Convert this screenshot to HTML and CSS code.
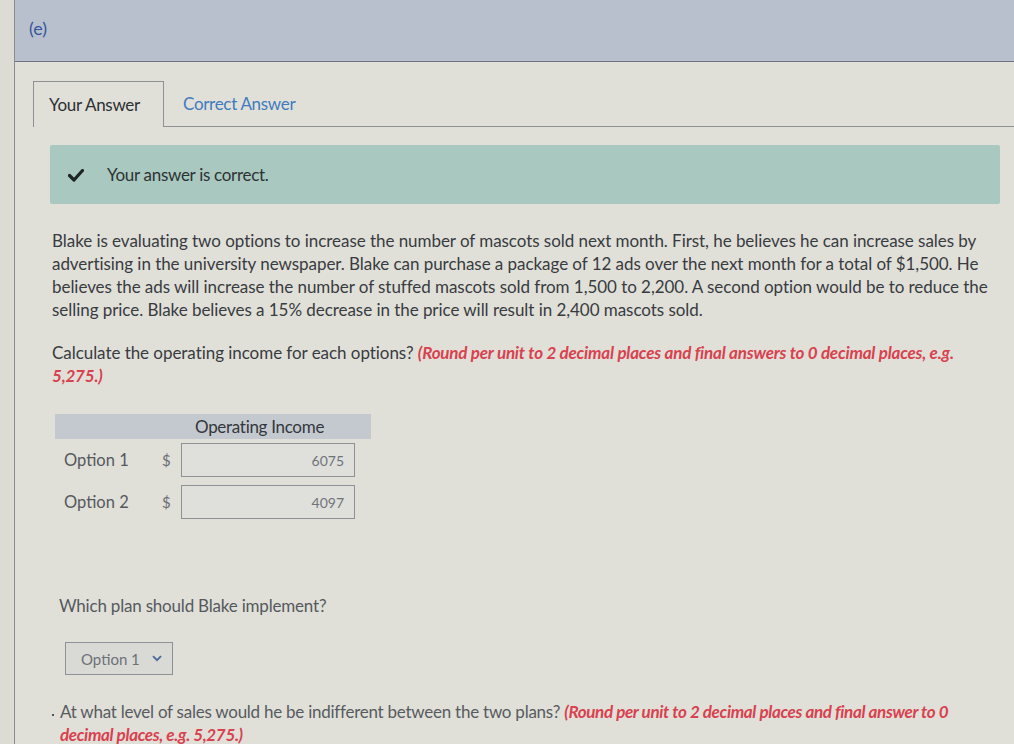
FILE: index.html
```html
<!DOCTYPE html>
<html>
<head>
<meta charset="utf-8">
<link rel="stylesheet" href="styles.css">
</head>
<body>
<div class="frame">
  <header class="part-head"><span class="part-label">(e)</span></header>
  <main class="content">
    <nav class="tabs">
      <div class="tab active">Your Answer</div>
      <div class="tab link">Correct Answer</div>
      <div class="tab-rest"></div>
    </nav>
    <div class="banner">
      <svg class="check" width="16" height="13" viewBox="0 0 16 13"><path d="M1.5 6.5 L6 11 L14.5 1.5" fill="none" stroke="#1f2526" stroke-width="3.2" stroke-linecap="round" stroke-linejoin="round"/></svg>
      <span>Your answer is correct.</span>
    </div>
    <p class="para">Blake is evaluating two options to increase the number of mascots sold next month. First, he believes he can increase sales by advertising in the university newspaper. Blake can purchase a package of 12 ads over the next month for a total of $1,500. He believes the ads will increase the number of stuffed mascots sold from 1,500 to 2,200. A second option would be to reduce the selling price. Blake believes a 15% decrease in the price will result in 2,400 mascots sold.</p>
    <p class="para calc">Calculate the operating income for each options? <em class="hint">(Round per unit to 2 decimal places and final answers to 0 decimal places, e.g. 5,275.)</em></p>
    <div class="table">
      <div class="thead"><span class="th">Operating Income</span></div>
      <div class="row"><span class="lbl">Option 1</span><span class="cur">$</span><span class="input">6075</span></div>
      <div class="row"><span class="lbl">Option 2</span><span class="cur">$</span><span class="input">4097</span></div>
    </div>
    <p class="question">Which plan should Blake implement?</p>
    <div class="select"><span>Option 1</span><svg width="10" height="7" viewBox="0 0 10 7"><path d="M1 1.2 L5 5.2 L9 1.2" fill="none" stroke="#4a6a9a" stroke-width="1.8"/></svg></div>
    <p class="para last"><span class="dot"></span>At what level of sales would he be indifferent between the two plans? <em class="hint">(Round per unit to 2 decimal places and final answer to 0 decimal places, e.g. 5,275.)</em></p>
  </main>
</div>
</body>
</html>
```
FILE: styles.css
```css
html, body {
  margin: 0;
  padding: 0;
  height: 100%;
  overflow: hidden;
}
body {
  background: #dcdcd5;
  font-family: Lato, "Open Sans", sans-serif;
  color: #3a3d40;
}
.frame {
  margin-left: 14px;
  border-left: 1px solid #8a8d90;
  height: 100%;
  background: #e0e0d9;
}
.part-head {
  height: 62px;
  background: #b9c0cd;
  border-bottom: 1px solid #6f7480;
  box-sizing: border-box;
  padding: 17px 0 0 14px;
}
.part-label {
  color: #35569a;
  font-size: 18px;
}
.content {
  padding: 19px 0 0 18px;
}
.tabs {
  display: flex;
  align-items: flex-end;
  height: 46px;
}
.tab {
  font-size: 17px;
  padding: 0 15px;
  height: 46px;
  box-sizing: border-box;
  display: flex;
  align-items: center;
  letter-spacing: -0.3px;
}
.tab.active {
  border: 1px solid #8d9094;
  border-bottom: none;
  color: #2c2f33;
  width: 131px;
}
.tab.link {
  color: #3f7bbd;
  border-bottom: 1px solid #8d9094;
  padding-left: 19px;
}
.tab-rest {
  flex: 1;
  height: 46px;
  border-bottom: 1px solid #8d9094;
  box-sizing: border-box;
}
.banner {
  margin: 18px 14px 0 17px;
  height: 59px;
  background: #a9c8c0;
  border-radius: 2px;
  display: flex;
  align-items: center;
  padding-left: 18px;
  font-size: 17px;
  color: #2d3334;
  letter-spacing: -0.3px;
}
.check {
  margin-right: 23px;
  margin-top: 2px;
}
.para {
  margin: 0;
  margin-left: 19px;
  width: 945px;
  font-size: 17px;
  line-height: 23px;
  color: #383b3f;
  letter-spacing: -0.05px;
}
.banner + .para {
  margin-top: 25px;
}
.calc {
  margin-top: 20px;
}
.hint {
  color: #d9414f;
  font-style: italic;
  font-weight: bold;
  letter-spacing: -0.2px;
}
.table {
  margin: 27px 0 0 22px;
  width: 316px;
}
.thead {
  height: 25px;
  background: #c4c9cf;
  display: flex;
  align-items: center;
  padding-left: 140px;
}
.th {
  font-size: 17px;
  color: #33373b;
  letter-spacing: -0.3px;
}
.row {
  display: flex;
  align-items: center;
  height: 34px;
  margin-top: 4px;
}
.row + .row {
  margin-top: 8px;
}
.lbl {
  width: 98px;
  padding-left: 9px;
  font-size: 16.5px;
  color: #55595d;
}
.cur {
  width: 19px;
  font-size: 15px;
  color: #6a6e72;
}
.input {
  width: 174px;
  height: 34px;
  box-sizing: border-box;
  border: 1px solid #8e9195;
  background: #dfe0db;
  display: flex;
  align-items: center;
  justify-content: flex-end;
  padding-right: 10px;
  font-size: 14px;
  color: #70747a;
}
.question {
  margin: 76px 0 0 26px;
  font-size: 17px;
  letter-spacing: -0.2px;
  color: #55595d;
}
.select {
  margin: 26px 0 0 32px;
  width: 108px;
  height: 33px;
  box-sizing: border-box;
  border: 1px solid #8e9195;
  background: #d9dad6;
  display: flex;
  align-items: center;
  padding-left: 15px;
  gap: 12px;
  font-size: 15px;
  color: #6d7176;
}
.last {
  position: relative;
  margin-top: 25px;
  margin-left: 27px;
  width: 930px;
  color: #575b60;
  letter-spacing: -0.25px;
}
.last .hint {
  letter-spacing: -0.35px;
}
.dot {
  position: absolute;
  left: -8px;
  top: 14px;
  width: 2px;
  height: 2px;
  background: #555;
}
```
